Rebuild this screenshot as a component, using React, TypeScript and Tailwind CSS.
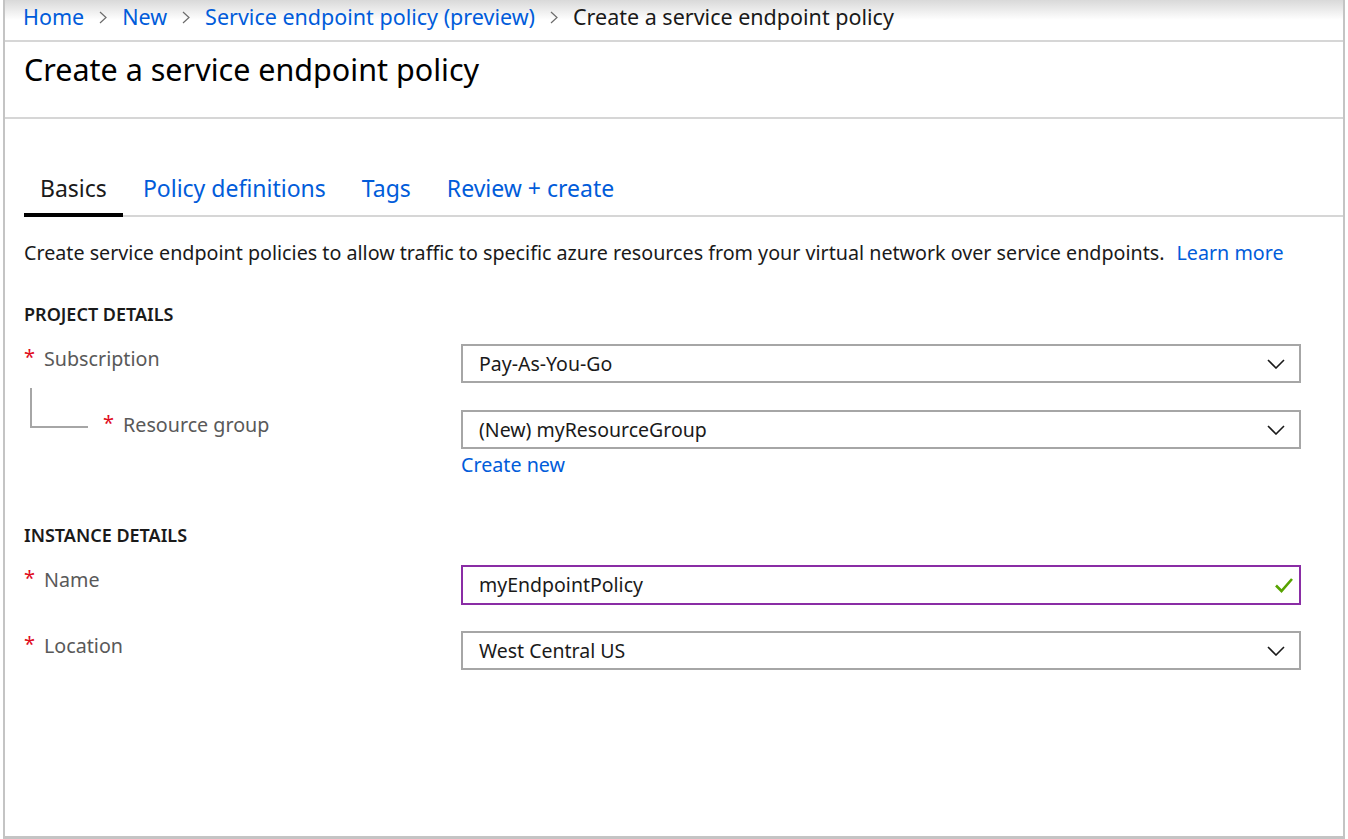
import React from 'react';

const font = { fontFamily: '"Noto Sans", "Open Sans", sans-serif' };

function Chevron() {
  return (
    <svg width="18" height="10" viewBox="0 0 18 10" className="shrink-0">
      <path d="M1 1 L9 9 L17 1" fill="none" stroke="#1a1a1a" strokeWidth="1.6" />
    </svg>
  );
}

function Crumb() {
  return (
    <svg width="8" height="13" viewBox="0 0 8 13" className="mx-[15px]">
      <path d="M1 1 L7 6.5 L1 12" fill="none" stroke="#6b6b6b" strokeWidth="1.2" />
    </svg>
  );
}

function Select({ value }: { value: string }) {
  return (
    <div className="h-[39px] w-[840px] border-2 border-[#a6a6a6] flex items-center justify-between pl-[16px] pr-[14px] text-[19.5px] text-[#1a1a1a]">
      <span>{value}</span>
      <Chevron />
    </div>
  );
}

function Label({ text }: { text: string }) {
  return (
    <div className="flex items-center gap-[9px] text-[19.7px] leading-[28px] text-[#595959]">
      <span className="text-[#e00b1c] text-[20px] leading-none mt-[-4px]">*</span>
      <span>{text}</span>
    </div>
  );
}

export default function App() {
  return (
    <div className="w-[1348px] h-[839px] px-[3px] bg-white" style={font}>
      <div className="h-full flex flex-col border-l-2 border-r-2 border-b-[3px] border-[#c4c4c4]">
        {/* Breadcrumb */}
        <div className="h-[42px] shrink-0 flex items-center pb-[5px] pl-[18px] text-[21.5px] bg-gradient-to-b from-[#d9d9d9] via-white to-white border-b-2 border-[#d6d6d6]">
          <span className="text-[#015cda]">Home</span>
          <Crumb />
          <span className="text-[#015cda]">New</span>
          <Crumb />
          <span className="text-[#015cda]">Service endpoint policy (preview)</span>
          <Crumb />
          <span className="text-[#1a1a1a]">Create a service endpoint policy</span>
        </div>

        {/* Title */}
        <div className="h-[77px] shrink-0 border-b-2 border-[#d6d6d6] pl-[19px] pt-[7px]">
          <h1 className="text-[30.5px] text-black leading-[40px]">Create a service endpoint policy</h1>
        </div>

        {/* Tabs */}
        <div className="mt-[49px] ml-[19px] flex border-b-2 border-[#d6d6d6] h-[49px] text-[23px]">
          <div className="px-[16px] border-b-[4px] border-black mb-[-2px] text-[#1a1a1a] leading-[40px]">Basics</div>
          <div className="ml-[20px] text-[#015cda] leading-[40px]">Policy definitions</div>
          <div className="ml-[36px] text-[#015cda] leading-[40px]">Tags</div>
          <div className="ml-[36px] text-[#015cda] leading-[40px]">Review + create</div>
        </div>

        {/* Body */}
        <div className="pl-[19px] pr-[42px]">
          <p className="mt-[22px] text-[19.7px] text-[#1a1a1a] leading-[28px]">
            Create service endpoint policies to allow traffic to specific azure resources from your virtual network over service endpoints.
            <span className="ml-[12px] text-[#015cda]">Learn more</span>
          </p>

          <div className="mt-[35px] text-[18px] leading-[24px] font-semibold text-[#1a1a1a]">PROJECT DETAILS</div>

          <div className="mt-[18px] flex items-start">
            <div className="w-[437px] pt-[1px]"><Label text="Subscription" /></div>
            <Select value="Pay-As-You-Go" />
          </div>

          <div className="mt-[27px] flex items-start">
            <div className="w-[437px] flex items-start">
              <div className="ml-[6px] mt-[-22px] w-[58px] h-[40px] border-l-2 border-b-2 border-[#a6a6a6]" />
              <div className="ml-[15px] pt-[1px]"><Label text="Resource group" /></div>
            </div>
            <div className="flex flex-col">
              <Select value="(New) myResourceGroup" />
              <span className="mt-[2px] text-[19.7px] text-[#015cda] leading-[28px]">Create new</span>
            </div>
          </div>

          <div className="mt-[44px] text-[18px] leading-[24px] font-semibold text-[#1a1a1a]">INSTANCE DETAILS</div>

          <div className="mt-[18px] flex items-start">
            <div className="w-[437px] pt-[1px]"><Label text="Name" /></div>
            <div className="h-[40px] w-[840px] border-2 border-[#8a2da5] flex items-center justify-between pl-[16px] pr-[5px] text-[19.5px] text-[#1a1a1a]">
              <span>myEndpointPolicy</span>
              <svg width="20" height="16" viewBox="0 0 20 16">
                <path d="M2 8.5 L7.5 14 L18 2" fill="none" stroke="#57a300" strokeWidth="2.6" />
              </svg>
            </div>
          </div>

          <div className="mt-[26px] flex items-start">
            <div className="w-[437px] pt-[1px]"><Label text="Location" /></div>
            <Select value="West Central US" />
          </div>
        </div>
      </div>
    </div>
  );
}
